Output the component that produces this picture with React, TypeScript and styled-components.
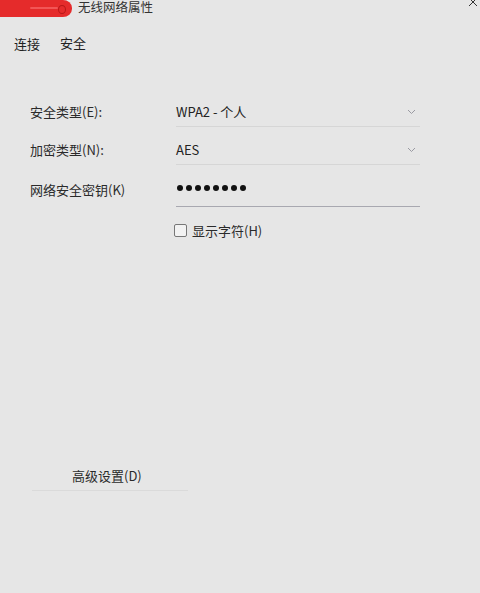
import styled, { createGlobalStyle } from "styled-components";

const GlobalStyle = createGlobalStyle`
  html, body {
    margin: 0;
    padding: 0;
    background: #e6e6e6;
  }
  body {
    font-family: "Noto Sans CJK SC", "Noto Sans", sans-serif;
    color: #222;
  }
`;

const Window = styled.main`
  width: 480px;
  height: 593px;
  background: #e6e6e6;
  position: relative;
  overflow: hidden;
`;

const TitleBar = styled.header`
  height: 22px;
  display: flex;
  align-items: flex-start;
`;

// red marker scribble covering part of the title
const Redact = styled.div`
  position: relative;
  width: 72px;
  height: 17px;
  flex: none;
  background: #e52b2b;
  border-radius: 0 9px 9px 0 / 0 8px 8px 0;

  &::before {
    content: "";
    position: absolute;
    left: 30px;
    top: 7px;
    width: 28px;
    height: 2px;
    background: #f25656;
    border-radius: 1px;
  }

  &::after {
    content: "";
    position: absolute;
    left: 58px;
    top: 5px;
    width: 6px;
    height: 7px;
    border: 1px solid #b81818;
    border-radius: 50%;
  }
`;

const Title = styled.span`
  font-size: 12.5px;
  line-height: 13px;
  color: #333;
  margin-left: 6px;
  margin-top: 0;
`;

const Close = styled.svg`
  position: absolute;
  right: 2px;
  top: -3px;
  width: 10px;
  height: 10px;
`;

const Tabs = styled.nav`
  display: flex;
  gap: 20px;
  padding: 12px 0 0 14px;
  font-size: 13px;
  line-height: 18px;
`;

const Tab = styled.span<{ $shift?: number }>`
  margin-top: ${(p) => p.$shift ?? 0}px;
`;

const Form = styled.section`
  padding: 44px 0 0 30px;
  display: grid;
  grid-template-columns: 146px 244px;
  align-items: start;
`;

const Label = styled.div<{ $shift?: number }>`
  font-size: 13px;
  height: 30px;
  line-height: 30px;
  margin-top: ${(p) => p.$shift ?? 0}px;
  color: #2a2a2a;
`;

const Field = styled.div<{ $strong?: boolean }>`
  height: ${(p) => (p.$strong ? 34 : 30)}px;
  margin-bottom: 8px;
  border-bottom: 1px solid ${(p) => (p.$strong ? "#a8a8b0" : "#d6d6d6")};
  display: flex;
  align-items: ${(p) => (p.$strong ? "flex-start" : "center")};
  padding-top: ${(p) => (p.$strong ? 12 : 0)}px;
  justify-content: space-between;
  font-size: 13px;
  padding-right: 4px;
  box-sizing: border-box;
`;

const Dots = styled.span`
  display: flex;
  gap: 3px;
  padding-left: 1px;
`;

const Dot = styled.span`
  width: 6px;
  height: 6px;
  border-radius: 50%;
  background: #111;
`;

const Chevron = styled.svg`
  width: 9px;
  height: 6px;
`;

const CheckRow = styled.label`
  display: flex;
  align-items: center;
  gap: 5px;
  margin: 6px 0 0 174px;
  font-size: 13px;
  color: #2a2a2a;
`;

const Box = styled.span`
  width: 11px;
  height: 11px;
  border: 1px solid #777;
  border-radius: 2px;
  background: #f2f2f2;
`;

const Advanced = styled.div`
  position: absolute;
  left: 32px;
  top: 465px;
  width: 156px;
  height: 26px;
  border-bottom: 1px solid #dadada;
  font-size: 13px;
  color: #2a2a2a;
  padding-left: 40px;
  box-sizing: border-box;
  line-height: 22px;
`;

const DownIcon = () => (
  <Chevron viewBox="0 0 9 6">
    <path d="M1 1 L4.5 4.5 L8 1" fill="none" stroke="#9a9aa2" strokeWidth="1" />
  </Chevron>
);

export default function App() {
  return (
    <>
      <GlobalStyle />
      <Window>
        <TitleBar>
          <Redact />
          <Title>无线网络属性</Title>
          <Close viewBox="0 0 10 10">
            <path d="M1 1 L9 9 M9 1 L1 9" stroke="#333" strokeWidth="1" />
          </Close>
        </TitleBar>
        <Tabs>
          <Tab $shift={1}>连接</Tab>
          <Tab>安全</Tab>
        </Tabs>
        <Form>
          <Label>安全类型(E):</Label>
          <Field>
            WPA2 - 个人
            <DownIcon />
          </Field>
          <Label>加密类型(N):</Label>
          <Field>
            AES
            <DownIcon />
          </Field>
          <Label $shift={2}>网络安全密钥(K)</Label>
          <Field $strong>
            <Dots>
              {Array.from({ length: 8 }).map((_, i) => (
                <Dot key={i} />
              ))}
            </Dots>
          </Field>
        </Form>
        <CheckRow>
          <Box />
          显示字符(H)
        </CheckRow>
        <Advanced>高级设置(D)</Advanced>
      </Window>
    </>
  );
}
